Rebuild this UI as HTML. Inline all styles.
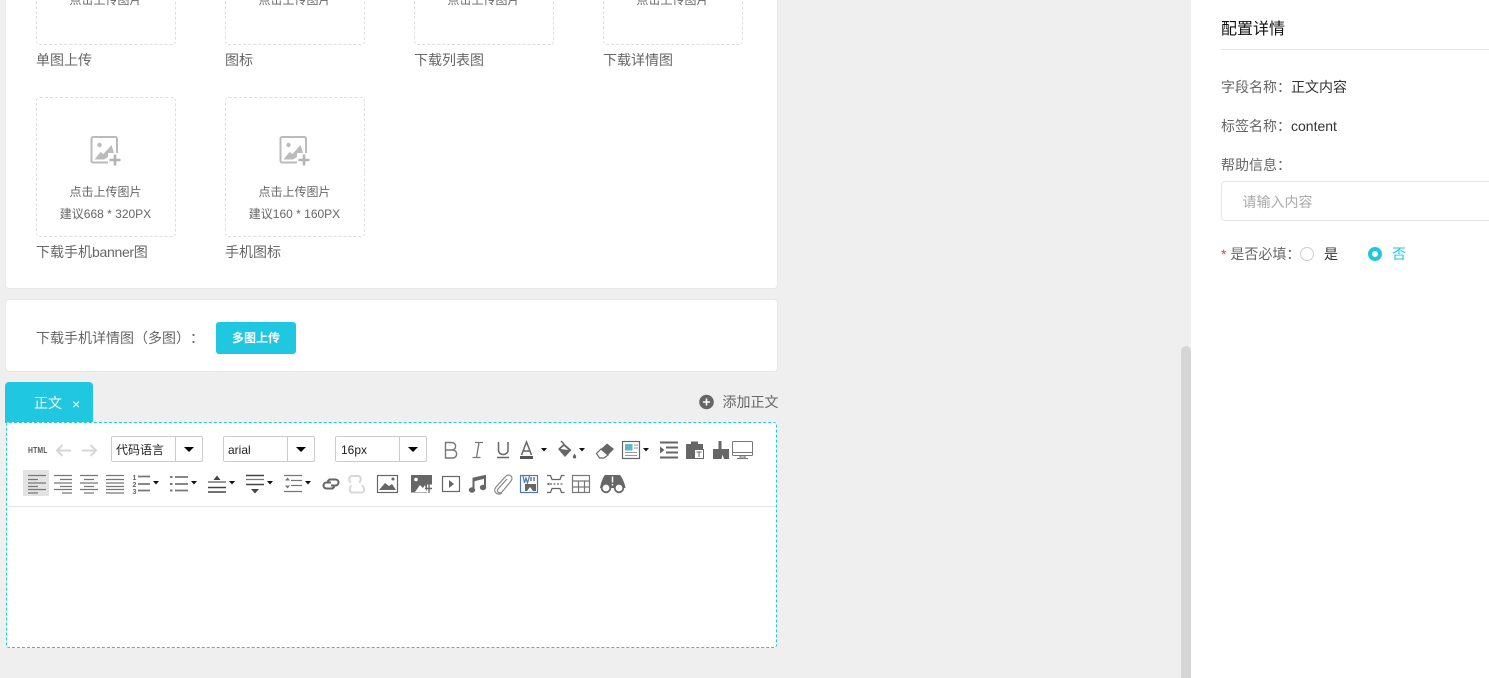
<!DOCTYPE html>
<html lang="zh-CN"><head><meta charset="utf-8"><title>配置详情</title>
<style>
*{box-sizing:border-box}
html,body{margin:0;padding:0}
body{width:1489px;height:678px;overflow:hidden;position:relative;background:#efefef;font-family:"Liberation Sans","Noto Sans CJK SC",sans-serif;font-size:14px;color:#666;text-spacing-trim:space-all}
.a{position:absolute;white-space:nowrap}
.card{position:absolute;background:#fff;border:1px solid #e8e8e8;border-radius:4px}
.box{position:absolute;width:140px;height:140px;border:1px dashed #dedede;border-radius:4px;background:#fff}
.t12{position:absolute;width:100%;text-align:center;font-size:12px;line-height:16px;color:#666;left:-.5px}
.lb{font-size:14px;line-height:20px;color:#666}
.sel{position:absolute;top:436px;width:92px;height:26px;border:1px solid #ccc;border-radius:2px;background:#fff;font-size:12px;line-height:26px;color:#222;padding-left:4px}
.sel.s16{padding-left:5px}
.sel i{position:absolute;left:63px;top:0;height:24px;border-left:1px solid #ccc}
.sel b{position:absolute;left:72px;top:10px;border:5px solid transparent;border-top:5px solid #000;border-bottom:0}
</style></head><body>
<div class="card" style="left:5px;top:-20px;width:773px;height:309px"></div>
<div class="box" style="left:36px;top:-95px"><div class="t12" style="top:86px">点击上传图片</div></div>
<div class="box" style="left:225px;top:-95px"><div class="t12" style="top:86px">点击上传图片</div></div>
<div class="box" style="left:414px;top:-95px"><div class="t12" style="top:86px">点击上传图片</div></div>
<div class="box" style="left:603px;top:-95px"><div class="t12" style="top:86px">点击上传图片</div></div>
<div class="a lb" style="left:36px;top:50px">单图上传</div>
<div class="a lb" style="left:225px;top:50px">图标</div>
<div class="a lb" style="left:414px;top:50px">下载列表图</div>
<div class="a lb" style="left:603px;top:50px">下载详情图</div>
<div class="box" style="left:36px;top:97px"><div class="t12" style="top:86px">点击上传图片</div><div class="t12" style="top:108px">建议668 * 320PX</div></div>
<div class="box" style="left:225px;top:97px"><div class="t12" style="top:86px">点击上传图片</div><div class="t12" style="top:108px">建议160 * 160PX</div></div>
<div class="a lb" style="left:36px;top:242px">下载手机<span style="letter-spacing:-.3px">banner</span>图</div>
<div class="a lb" style="left:225px;top:242px">手机图标</div>

<div class="card" style="left:5px;top:299px;width:773px;height:73px"></div>
<div class="a lb" style="left:36px;top:328px">下载手机详情图（多图）：</div>
<div class="a" style="left:216px;top:322px;width:80px;height:32px;background:#20c7e0;border-radius:3px;color:#fff;font-size:12px;font-weight:bold;line-height:32px;text-align:center">多图上传</div>

<div class="a" style="left:5px;top:382px;width:88px;height:41px;background:#20c7e0;border-radius:4px 4px 0 0"></div>
<div class="a" style="left:34px;top:393px;color:#fff;font-size:14px;line-height:20px">正文</div>
<div class="a" style="left:72px;top:394px;color:#fff;font-size:14px;line-height:20px">×</div>
<div class="a" style="left:722.500px;top:392px;font-size:14px;line-height:20px;color:#666">添加正文</div>

<div class="a" style="left:6px;top:422px;width:771px;height:226px;background:#fff;border:1px dashed #20c7e0;border-radius:3px"></div>
<div class="a" style="left:7px;top:506px;width:769px;height:1px;background:#e6e6e6"></div>
<div class="a" style="left:23px;top:470px;width:26px;height:26px;background:#e3e3e3"></div>
<div class="a" style="left:28px;top:445px;font-size:8px;font-weight:bold;line-height:11px;color:#555;transform:scaleX(.85);transform-origin:0 0;letter-spacing:.2px">HTML</div>

<div class="sel" style="left:111px">代码语言<i></i><b></b></div>
<div class="sel" style="left:223px">arial<i></i><b></b></div>
<div class="sel s16" style="left:335px">16px<i></i><b></b></div>

<div class="a" style="left:1181px;top:346px;width:10px;height:332px;background:#d6d6d6;border-radius:5px 5px 0 0"></div>
<div class="a" style="left:1191px;top:0;width:298px;height:678px;background:#fff"></div>
<div class="a" style="left:1221px;top:19px;font-size:16px;line-height:22px;color:#111;letter-spacing:0">配置详情</div>
<div class="a" style="left:1221px;top:49px;width:268px;height:1px;background:#e6e6e6"></div>
<div class="a lb" style="left:1221px;top:77px">字段名称：<span style="position:absolute;left:70px;color:#333">正文内容</span></div>
<div class="a lb" style="left:1221px;top:116px">标签名称：<span style="position:absolute;left:70px;color:#333">content</span></div>
<div class="a lb" style="left:1221px;top:155px">帮助信息：</div>
<div class="a" style="left:1221px;top:181px;width:280px;height:40px;border:1px solid #e6e6e6;border-radius:4px;padding-left:20.500px;line-height:40px;color:#aaa;font-size:14px">请输入内容</div>
<div class="a lb" style="left:1221px;top:244px"><span style="color:#f33">*</span> 是否必填：</div>
<div class="a" style="left:1300px;top:247px;width:14px;height:14px;border:1px solid #ccc;border-radius:50%"></div>
<div class="a lb" style="left:1324px;top:244px;color:#333">是</div>
<div class="a" style="left:1368px;top:247px;width:14px;height:14px;border:4.500px solid #20c7e0;border-radius:50%;background:#fff"></div>
<div class="a lb" style="left:1392px;top:244px;color:#20c7e0">否</div>

<svg class="a" style="left:0;top:0" width="1489" height="678" viewBox="0 0 1489 678" fill="none">
<defs>
<g id="up">
<rect x="1" y="1" width="25.500" height="25.500" rx="1.500" stroke="#bbb" stroke-width="2"/>
<circle cx="9" cy="9" r="2.200" fill="#bbb"/>
<path d="M4 23.500l6-7.500 3 2 8-9 2.500 8-6 4-4 2.500z" fill="#bbb"/>
<rect x="17.500" y="17" width="13" height="13" fill="#fff"/>
<path d="M24.500 18.500v11M19 24h11" stroke="#b4b4b4" stroke-width="2.600"/>
</g>
<path id="c" d="M0 0h6l-3 3.500z" fill="#111"/>
</defs>
<use href="#up" x="90.500" y="136"/><use href="#up" x="279.500" y="136"/>
<circle cx="706.500" cy="402" r="7.300" fill="#666"/><path d="M703 402h7M706.500 398.500v7" stroke="#fff" stroke-width="1.600"/>

<!-- arrows -->
<path d="M71 450.500H57M62.500 445l-5.500 5.500 5.500 5.500" stroke="#d6d6d6" stroke-width="2"/>
<path d="M82 450.500h14M90.500 445l5.500 5.500-5.500 5.500" stroke="#d6d6d6" stroke-width="2"/>

<!-- B I U A -->
<path d="M445.500 442.500h6c5.500 0 5.500 7.500 0 7.500h-6zM445.500 450h7c5.500 0 5.500 8 0 8h-7z" stroke="#777" stroke-width="1.400"/>
<path d="M475 442.500h8M472.500 457.500h8M479 442.500l-2.500 15" stroke="#777" stroke-width="1.300"/>
<path d="M498.500 442v8c0 6 9.500 6 9.500 0v-8" stroke="#666" stroke-width="1.500"/><path d="M497 457.500h12" stroke="#666" stroke-width="1.500"/>
<path d="M521.500 455l5-13 5 13M523 451h7" stroke="#666" stroke-width="1.500"/><path d="M520 456h13v3h-13z" fill="#555"/>
<use href="#c" x="541" y="448"/>
<!-- paint -->
<path d="M561 441l3 3" stroke="#666" stroke-width="1.500"/><path d="M558 449l6-5.500 7.500 6.500-6.500 7z" fill="#666"/><path d="M560.500 449l3.500-3 4.500 4z" fill="#fff"/><path d="M574.500 453.500c-2.200 3-2.200 5 0 5s2.200-2 0-5z" fill="#666"/>
<use href="#c" x="579" y="448"/>
<!-- eraser -->
<path d="M601 449l6-5.500 7 5.500-6 6z" fill="#666"/><path d="M601 449l-4.500 4.500 3 4.500h4.500l4-3z" fill="#fff" stroke="#666" stroke-width="1.200"/>
<!-- template -->
<rect x="622.500" y="441.500" width="17" height="17" stroke="#666" stroke-width="1.200"/><rect x="625" y="444" width="7.500" height="6.500" fill="#5fb9c4"/><path d="M634 445h4M634 448h4M625 452.500h12M625 455.500h12" stroke="#999"/>
<use href="#c" x="643" y="448"/>
<!-- indent -->
<path d="M660 441.500h18v2h-18zM666 446.500h12v2h-12zM666 451.500h12v2h-12zM660 456.500h18v2h-18z" fill="#666"/><path d="M660 446.500v7l4.500-3.500z" fill="#666"/>
<!-- paste -->
<path d="M686 444h5v-2.500h7v2.500h5v5h-9v10h-8z" fill="#666"/><rect x="694.500" y="449.500" width="9" height="9" fill="#fff" stroke="#666"/><path d="M696.500 452h5M699 452v5" stroke="#666"/>
<!-- brush -->
<path d="M718.500 441h3v8h7.500v10h-5l-1.500-4.500-1 4.500h-8.500v-10h5.500z" fill="#666"/>
<!-- monitor -->
<rect x="732.500" y="441.500" width="20" height="14" rx="1" stroke="#777"/><path d="M733 452.500h19M740 456h5v2h-5zM737 458.500h11" stroke="#777"/>

<!-- row 2 aligns -->
<path d="M28 475.500h18M28 479.500h10M28 483h18M28 486.500h10M28 489.500h18M28 493h10" stroke="#777" stroke-width="1.200"/>
<path d="M54 475.500h18M60 479.500h12M54 483h18M60 486.500h12M54 489.500h18M62 493h10" stroke="#777" stroke-width="1.200"/>
<path d="M80 475.500h18M84 479.500h10M80 483h18M84 486.500h10M80 489.500h18M84 493h10" stroke="#777" stroke-width="1.200"/>
<path d="M106 475.500h18M106 479.500h18M106 483h18M106 486.500h18M106 489.500h18M106 493h18" stroke="#777" stroke-width="1.200"/>
<!-- ol -->
<path d="M138 476.500h12M138 484h12M138 490.500h12" stroke="#777" stroke-width="1.800"/><text x="132.500" y="480" font-family="Liberation Sans" font-size="7" font-weight="bold" fill="#666">1</text><text x="132.500" y="487" font-family="Liberation Sans" font-size="7" font-weight="bold" fill="#666">2</text><text x="132.500" y="494" font-family="Liberation Sans" font-size="7" font-weight="bold" fill="#666">3</text>
<use href="#c" x="153" y="481"/>
<!-- ul -->
<path d="M175 477h13M175 484h13M175 490.500h13" stroke="#777" stroke-width="1.800"/><path d="M170 476h2.500v2h-2.500zM170 483h2.500v2h-2.500zM170 489.500h2.500v2h-2.500z" fill="#777"/>
<use href="#c" x="191" y="481"/>
<!-- row spacing -->
<path d="M208 482h18" stroke="#777" stroke-width="1.400"/><path d="M208 487.500h18M208 492h18" stroke="#444" stroke-width="1.400"/><path d="M213.500 480l3.500-4.500 3.500 4.500z" fill="#444"/>
<use href="#c" x="229" y="481"/>
<path d="M246 475.500h18" stroke="#444" stroke-width="1.400"/><path d="M246 479.500h18" stroke="#777" stroke-width="1.200"/><path d="M246 484.500h18" stroke="#444" stroke-width="1.400"/><path d="M251 489l4 4.500 4-4.500z" fill="#444"/>
<use href="#c" x="267" y="481"/>
<path d="M284 475.500h18M291 480.500h11M291 485.500h11M284 491.500h18" stroke="#777" stroke-width="1.200"/><path d="M285 480.500l2.500-3 2.500 3zM285 485.500l2.500 3 2.500-3z" fill="#777"/>
<use href="#c" x="305" y="481"/>
<!-- link -->
<path d="M331 482.500h-4.500a3 3 0 0 0 0 6h6l2-2M331 485.500h4.500a3 3 0 0 0 0-6h-6l-2 2" stroke="#666" stroke-width="2"/>
<path d="M352 476h6c3.500 0 3.500 5 1 6.500M352 476c-3.500 0-3.500 5-1 6.500M352.500 492.500h9c3.500 0 3.500-6 0-7M352.500 492.500c-3.500 0-3.500-5-1-7" stroke="#d8d8d8" stroke-width="2"/>
<!-- image -->
<rect x="377.500" y="475.500" width="20" height="17" stroke="#666" stroke-width="1.200"/><path d="M379 490l6-7 4 3 3-2 4 6z" fill="#666"/><circle cx="393" cy="479" r="1.500" fill="#666"/>
<!-- multi -->
<path d="M411 475h21v9.500h-5v8h-16z" fill="#666"/><circle cx="416" cy="479.500" r="1.800" fill="#fff"/><path d="M415 492l5-7 3 3 2-3 2 7z" fill="#fff"/><path d="M429 484v9M425 488.500h7" stroke="#666" stroke-width="1.400"/>
<!-- video -->
<rect x="442.500" y="476.500" width="17" height="15" stroke="#666" stroke-width="1.200"/><path d="M449 480v8l5-4z" fill="#666"/>
<!-- music -->
<path d="M473.500 490v-11.500l11.500-2.500v11" stroke="#666" stroke-width="2"/><path d="M473 480l12-3" stroke="#666" stroke-width="3"/><ellipse cx="472" cy="490" rx="3.200" ry="2.700" fill="#666"/><ellipse cx="483" cy="487.500" rx="3.200" ry="2.700" fill="#666"/>
<!-- clip -->
<path d="M507 479l-9 10c-2 3 2 5 4 3l9-11c3-4-2-8-5-5l-10 11c-4 5 2 9 6 6" stroke="#888" stroke-width="1.200"/>
<!-- word -->
<rect x="520.500" y="475.500" width="17" height="17" stroke="#4a7ab5" stroke-width="1.200"/><path d="M523 476l1.500 7 1.500-5 1.500 5 2-7" stroke="#4a7ab5" stroke-width="1.200"/><path d="M531 477v4M534 477v4" stroke="#777" stroke-width="1.500"/><path d="M525 484h11v7h-11z" fill="#666"/><path d="M527 491l3-4 3 4z" fill="#fff"/>
<!-- pagebreak -->
<path d="M547 475.500h3.500l1.500 4h8l1.500-4h3M547 492.500h3.500l1.500-4h8l1.500 4h3" stroke="#666" stroke-width="1.300"/><path d="M550 484h14" stroke="#666" stroke-dasharray="2 1.500" stroke-width="1.300"/><path d="M546.500 484l3-1.500v3z" fill="#666"/>
<!-- table -->
<rect x="572.500" y="475.500" width="17" height="17" stroke="#777" stroke-width="1.200"/><path d="M572 481h18M572 487h18M578.500 481v12M584.500 481v12" stroke="#777" stroke-width="1.200"/>
<!-- binoculars -->
<path d="M605 475h15c2 2 5 9 5.500 13h-25.500c.5-4 3-11 5-13z" fill="#666"/><circle cx="606" cy="488" r="4.300" fill="#fff" stroke="#666" stroke-width="1.800"/><circle cx="619" cy="488" r="4.300" fill="#fff" stroke="#666" stroke-width="1.800"/><path d="M612.500 476.500v6M612.500 484v1.500" stroke="#fff" stroke-width="1.500"/>
</svg>
</body></html>
